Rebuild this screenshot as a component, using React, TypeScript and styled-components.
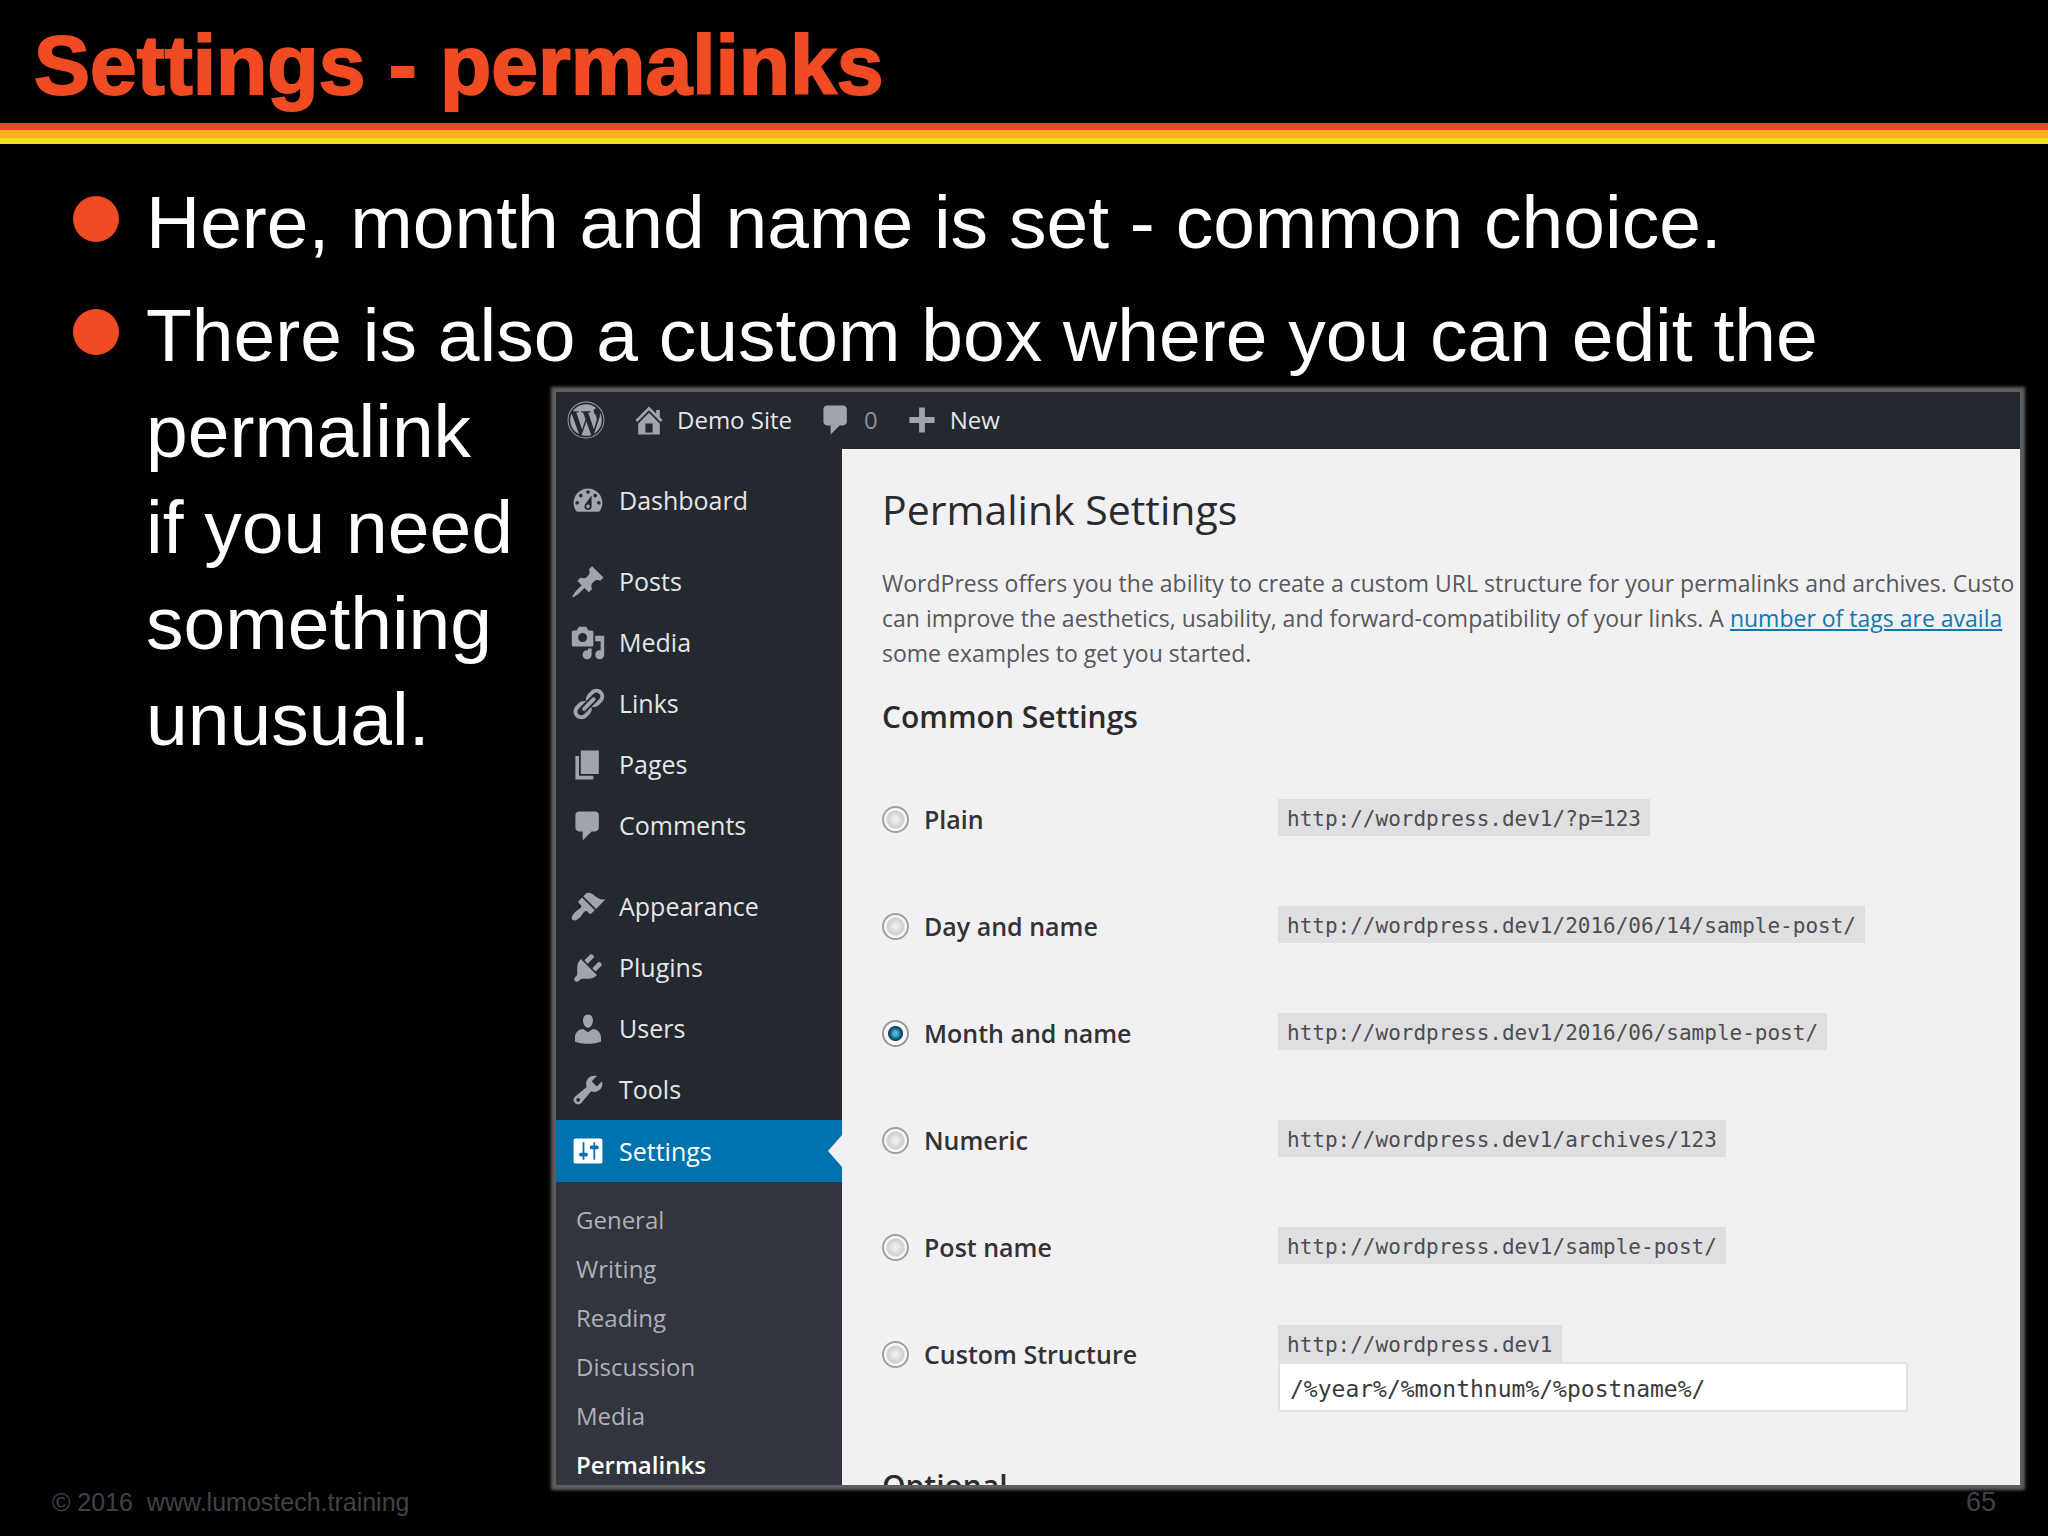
import React, { useState } from "react";
import styled, { createGlobalStyle, css } from "styled-components";
import { FaWordpress } from "react-icons/fa";

const GlobalStyle = createGlobalStyle`
  *, *::before, *::after { box-sizing: border-box; }
  body { margin: 0; background: #020003; }
  h1, h2, p, ul, figure { margin: 0; padding: 0; }
  ul { list-style: none; }
  a { color: inherit; text-decoration: none; }
`;

const slideFont = `"Liberation Sans", Arial, sans-serif`;
const adminFont = `"Open Sans", "Noto Sans", sans-serif`;
const codeFont = `"DejaVu Sans Mono", monospace`;

/* ---------- Slide ---------- */

const Slide = styled.main`
  display: flex;
  flex-direction: column;
  height: 100vh;
  overflow: hidden;
  font-family: ${slideFont};
  color: #fff;
`;

const TitleBar = styled.header`
  padding: 15px 34px 8px;
  background: #000;
`;

const Title = styled.h1`
  font-size: 84px;
  line-height: 100px;
  font-weight: 700;
  color: #f04b22;
  -webkit-text-stroke: 2px #f04b22;
`;

const Stripes = styled.div`
  height: 21px;
  flex: none;
  background: linear-gradient(#f04827 0 7px, #fcb01c 7px 15px, #ece01f 15px);
`;

const Bullets = styled.ul`
  flex: 1;
  min-height: 0;
  display: flex;
  flex-direction: column;
  gap: 17px;
  padding: 30px 28px 0 73px;
  font-size: 75px;
  line-height: 96px;
`;

const Bullet = styled.li<{ $fill?: boolean }>`
  display: flex;
  gap: 27px;
  ${(p) => p.$fill && css`flex: 1; min-height: 0;`}

  &::before {
    content: "";
    flex: none;
    width: 46px;
    height: 46px;
    margin-top: 22px;
    border-radius: 50%;
    background: #f04b22;
  }
`;

const BulletBody = styled.div`
  flex: 1;
  min-width: 0;
  display: flex;
  flex-direction: column;
`;

const Beside = styled.div`
  flex: 1;
  min-height: 0;
  display: flex;
  gap: 34px;
`;

const WrappedText = styled.p`
  flex: none;
  width: 376px;
`;

const Footer = styled.footer`
  flex: none;
  display: flex;
  justify-content: space-between;
  align-items: center;
  height: 51px;
  padding: 0 52px 18px;
  font-size: 25px;
  line-height: 32px;
  color: #434144;
  white-space: pre;
`;

const PageNumber = styled.span`
  font-size: 27px;
`;

/* ---------- Screen capture ---------- */

const Capture = styled.figure`
  flex: 1;
  min-width: 0;
  display: flex;
  flex-direction: column;
  margin-top: 9px;
  overflow: hidden;
  background: #f1f0f2;
  box-shadow: 0 0 3px 5px #5f5e60;
  font-family: ${adminFont};
  font-size: 24px;
  line-height: 35px;
`;

const AdminBar = styled.div`
  flex: none;
  display: flex;
  align-items: center;
  gap: 26px;
  height: 57px;
  padding: 0 11px 2px;
  background: #24282f;
  color: #e3e5e9;
`;

const BarItem = styled.a<{ $dim?: boolean }>`
  display: flex;
  align-items: center;
  gap: 10px;
  ${(p) => p.$dim && css`color: #8b8f96;`}
`;

const Glyph = styled.svg`
  flex: none;
  width: 36px;
  height: 36px;
  fill: #a0a4ab;
`;

const Logo = styled(FaWordpress)`
  width: 38px;
  height: 38px;
  color: #a0a4ab;
`;

const Workspace = styled.div`
  flex: 1;
  min-height: 0;
  display: flex;
`;

const Sidebar = styled.nav`
  flex: none;
  width: 286px;
  padding-top: 21px;
  overflow: hidden;
  background: #24282f;
  color: #e3e5e9;
`;

const MenuGroup = styled.ul`
  margin-bottom: 20px;
`;

const MenuLink = styled.a<{ $active?: boolean }>`
  position: relative;
  display: flex;
  align-items: center;
  gap: 13px;
  height: 61px;
  padding: 0 14px;
  font-size: 25px;

  ${(p) =>
    p.$active &&
    css`
      height: 62px;
      background: #0073ae;
      color: #fff;

      ${Glyph} {
        fill: #fff;
      }

      &::after {
        content: "";
        position: absolute;
        right: 0;
        top: 15px;
        border: 16px solid transparent;
        border-left-width: 0;
        border-right: 14px solid #f1f0f2;
      }
    `}
`;

const SubMenu = styled.ul`
  padding: 13px 20px 40px;
  background: #32353e;
`;

const SubLink = styled.a<{ $current?: boolean }>`
  display: block;
  line-height: 49px;
  color: ${(p) => (p.$current ? "#fff" : "#aeb1b7")};
  font-weight: ${(p) => (p.$current ? 600 : 400)};
`;

const Content = styled.section`
  flex: 1;
  min-width: 0;
  padding: 33px 0 0 40px;
  overflow: hidden;
  white-space: nowrap;
  color: #58585a;
`;

const PageHeading = styled.h2`
  font-size: 41px;
  line-height: 54px;
  font-weight: 400;
  color: #2b2b2e;
`;

const Intro = styled.p`
  margin-top: 30px;
  font-size: 23px;
`;

const TagLink = styled.a`
  color: #0f79ad;
  text-decoration: underline;
`;

const SectionHeading = styled.h3<{ $gap: number }>`
  margin: ${(p) => p.$gap}px 0 0;
  font-size: 30px;
  line-height: 40px;
  font-weight: 600;
  color: #2b2b2e;
`;

const OptionTable = styled.table`
  width: 100%;
  margin-top: 29px;
  border-collapse: collapse;

  th,
  td {
    height: 107px;
    padding: 0;
    text-align: left;
    vertical-align: top;
  }
  th {
    width: 396px;
    padding-top: 36px;
  }
  td {
    padding-top: 33px;
  }
`;

const StructureCell = styled.td`
  && {
    padding-top: 24px;
  }
`;

const OptionLabel = styled.label`
  display: flex;
  align-items: center;
  gap: 15px;
  font-size: 25px;
  font-weight: 600;
  color: #333336;
`;

const Radio = styled.input`
  appearance: none;
  width: 27px;
  height: 27px;
  margin: 0;
  border: 2px solid #a09fa1;
  border-radius: 50%;
  background: radial-gradient(circle at 50% 50%, #ececee 0 2px, #cfcfd1 8px, #f8f8f8 10px);

  &:checked {
    border-color: #98989b;
    background: radial-gradient(circle at 50% 50%, #4db4d6 0 2px, #17648f 5px, #123d5c 7px, #f4f6f8 8px);
  }
`;

const Code = styled.code`
  display: block;
  width: max-content;
  padding: 4px 9px 0;
  background: #dfdee0;
  font-family: ${codeFont};
  font-size: 21px;
  line-height: 33px;
  color: #4d4d4f;
`;

const StructureInput = styled.input`
  display: block;
  width: 630px;
  height: 50px;
  padding: 4px 10px 0;
  border: 2px solid #e2e1e4;
  border-radius: 3px;
  background: #fff;
  font-family: ${codeFont};
  font-size: 23px;
  color: #3a3a3c;
`;

/* ---------- Data ---------- */

const icons = {
  home: "M16 8.5l1.53 1.53-1.06 1.06L10 4.6l-6.47 6.49-1.06-1.06L10 2.5l4 4v-2h2v4zm-6-2.46l6 5.99V18H4v-5.97zM12 17v-5H8v5h4z",
  plus: "M17 8.4v3.2h-5.4V17H8.4v-5.4H3V8.4h5.4V3h3.2v5.4z",
  dashboard:
    "M3.76 16h12.48c1.1-1.37 1.76-3.11 1.76-5 0-4.42-3.58-8-8-8s-8 3.58-8 8c0 1.89.66 3.63 1.76 5zM10 4c.55 0 1 .45 1 1s-.45 1-1 1-1-.45-1-1 .45-1 1-1zM6 6c.55 0 1 .45 1 1s-.45 1-1 1-1-.45-1-1 .45-1 1-1zm8 0c.55 0 1 .45 1 1s-.45 1-1 1-1-.45-1-1 .45-1 1-1zm-5.37 5.55L12 7v6c0 1.1-.9 2-2 2s-2-.9-2-2c0-.57.24-1.08.63-1.45zM4 10c.55 0 1 .45 1 1s-.45 1-1 1-1-.45-1-1 .45-1 1-1zm12 0c.55 0 1 .45 1 1s-.45 1-1 1-1-.45-1-1 .45-1 1-1zm-5 3c0-.55-.45-1-1-1s-1 .45-1 1 .45 1 1 1 1-.45 1-1z",
  posts:
    "M10.44 3.02l1.82-1.82 6.36 6.35-1.83 1.82c-1.05-.68-2.48-.57-3.41.36l-.75.75c-.92.93-1.04 2.35-.35 3.41l-1.83 1.82-2.41-2.41-2.8 2.79c-.42.42-3.38 2.71-3.8 2.29s1.86-3.39 2.28-3.81l2.79-2.79L4.1 9.36l1.83-1.82c1.05.69 2.48.57 3.4-.36l.75-.75c.93-.92 1.05-2.35.36-3.41z",
  media:
    "M13 11V4c0-.55-.45-1-1-1h-1.67L9 1H5L3.67 3H2c-.55 0-1 .45-1 1v7c0 .55.45 1 1 1h10c.55 0 1-.45 1-1zM7 4.5c1.38 0 2.5 1.12 2.5 2.5S8.38 9.5 7 9.5 4.5 8.38 4.5 7 5.62 4.5 7 4.5zM14 6h5v10.5c0 1.38-1.12 2.5-2.5 2.5S14 17.88 14 16.5s1.12-2.5 2.5-2.5c.17 0 .34.02.5.05V9h-3V6zm-4 8.05V13h2v3.5c0 1.38-1.12 2.5-2.5 2.5S7 17.88 7 16.5 8.12 14 9.5 14c.17 0 .34.02.5.05z",
  links:
    "M17.74 2.76c1.68 1.69 1.68 4.41 0 6.1l-1.53 1.52c-1.12 1.12-2.7 1.47-4.14 1.09l2.62-2.61.76-.77.76-.76c.84-.84.84-2.2 0-3.04-.84-.85-2.2-.85-3.04 0l-.77.76-3.38 3.38c-.37-1.44-.02-3.02 1.1-4.14l1.52-1.53c1.69-1.68 4.42-1.68 6.1 0zM8.59 13.43l5.34-5.34c.42-.42.42-1.1 0-1.52-.44-.43-1.13-.39-1.53 0l-5.33 5.34c-.42.42-.42 1.1 0 1.52.44.43 1.13.39 1.52 0zm-.76 2.29l4.14-4.15c.38 1.44.03 3.02-1.09 4.14l-1.52 1.53c-1.69 1.68-4.41 1.68-6.1 0-1.68-1.68-1.68-4.42 0-6.1l1.53-1.52c1.12-1.12 2.7-1.47 4.14-1.1l-4.14 4.15c-.85.84-.85 2.2 0 3.05.84.84 2.2.84 3.04 0z",
  pages: "M6 15V2h10v13H6zm-1 1h8v2H3V5h2v11z",
  comments:
    "M5 2h9c1.1 0 2 .9 2 2v7c0 1.1-.9 2-2 2h-2l-5 5v-5H5c-1.1 0-2-.9-2-2V4c0-1.1.9-2 2-2z",
  appearance:
    "M14.48 11.06L7.41 3.99l1.5-1.5c.5-.56 2.3-.47 3.51.32 1.21.8 1.43 1.28 2.91 2.1 1.18.64 2.45 1.26 4.45.85zm-.71.71L6.7 4.7 4.93 6.47c-.39.39-.39 1.02 0 1.41l1.06 1.06c.39.39.39 1.03 0 1.42-.6.6-1.43 1.11-2.21 1.69-.35.26-.7.53-1.01.84C1.43 14.23.4 16.08 1.4 17.07c.99 1 2.84-.03 4.18-1.36.31-.31.58-.66.85-1.02.57-.78 1.08-1.61 1.69-2.21.39-.39 1.02-.39 1.41 0l1.06 1.06c.39.39 1.02.39 1.41 0z",
  plugins:
    "M13.11 4.36L9.87 7.6 8 5.73l3.24-3.24c.35-.34 1.05-.2 1.56.32.52.51.66 1.21.31 1.55zm-8 1.77l.91-1.12 9.01 9.01-1.19.84c-.71.71-2.63 1.16-3.82 1.16H6.14L4.9 17.26c-.59.59-1.54.59-2.12 0-.59-.58-.59-1.53 0-2.12l1.24-1.24v-3.88c0-1.13.4-3.19 1.09-3.89zm7.26 3.97l3.24-3.24c.34-.35 1.04-.21 1.55.31.52.51.66 1.21.31 1.55l-3.24 3.25z",
  users:
    "M10 9.25c-2.27 0-2.73-3.44-2.73-3.44C7 4.02 7.82 2 9.97 2c2.16 0 2.98 2.02 2.71 3.81 0 0-.41 3.44-2.68 3.44zm0 2.57L12.72 10c2.39 0 4.52 2.33 4.52 4.53v2.49s-3.65 1.13-7.24 1.13c-3.65 0-7.24-1.13-7.24-1.13v-2.49c0-2.25 1.94-4.48 4.47-4.48z",
  tools:
    "M16.68 9.77c-1.34 1.34-3.3 1.67-4.95.99l-5.41 6.52c-.99.99-2.59.99-3.58 0s-.99-2.59 0-3.57l6.52-5.42c-.68-1.65-.35-3.61.99-4.95 1.28-1.28 3.12-1.62 4.72-1.06l-2.89 2.89 2.82 2.82 2.86-2.87c.53 1.58.18 3.39-1.08 4.65zM3.81 16.21c.4.39 1.04.39 1.43 0 .4-.4.4-1.04 0-1.43-.39-.4-1.03-.4-1.43 0-.39.39-.39 1.03 0 1.43z",
  settings:
    "M18 16V4c0-.55-.45-1-1-1H3c-.55 0-1 .45-1 1v12c0 .55.45 1 1 1h14c.55 0 1-.45 1-1zM8 11h1c.55 0 1 .45 1 1s-.45 1-1 1H8v1.5c0 .28-.22.5-.5.5s-.5-.22-.5-.5V13H6c-.55 0-1-.45-1-1s.45-1 1-1h1V5.5c0-.28.22-.5.5-.5s.5.22.5.5V11zm5-2h-1c-.55 0-1-.45-1-1s.45-1 1-1h1V5.5c0-.28.22-.5.5-.5s.5.22.5.5V7h1c.55 0 1 .45 1 1s-.45 1-1 1h-1v5.5c0 .28-.22.5-.5.5s-.5-.22-.5-.5V9z",
};

type IconName = keyof typeof icons;

const Icon = ({ name }: { name: IconName }) => (
  <Glyph viewBox="0 0 20 20" aria-hidden="true">
    <path fillRule="evenodd" d={icons[name]} />
  </Glyph>
);

const menuGroups: { label: string; icon: IconName }[][] = [
  [{ label: "Dashboard", icon: "dashboard" }],
  [
    { label: "Posts", icon: "posts" },
    { label: "Media", icon: "media" },
    { label: "Links", icon: "links" },
    { label: "Pages", icon: "pages" },
    { label: "Comments", icon: "comments" },
  ],
  [
    { label: "Appearance", icon: "appearance" },
    { label: "Plugins", icon: "plugins" },
    { label: "Users", icon: "users" },
    { label: "Tools", icon: "tools" },
    { label: "Settings", icon: "settings" },
  ],
];

const settingsPages = ["General", "Writing", "Reading", "Discussion", "Media", "Permalinks"];

const host = "http://wordpress.dev1";

const options = [
  { id: "plain", label: "Plain", sample: "/?p=123" },
  { id: "day", label: "Day and name", sample: "/2016/06/14/sample-post/" },
  { id: "month", label: "Month and name", sample: "/2016/06/sample-post/" },
  { id: "numeric", label: "Numeric", sample: "/archives/123" },
  { id: "post", label: "Post name", sample: "/sample-post/" },
  { id: "custom", label: "Custom Structure", sample: "" },
];

/* ---------- Parts ---------- */

const AdminMenu = () => (
  <Sidebar>
    {menuGroups.map((group, i) => (
      <MenuGroup key={i}>
        {group.map(({ label, icon }) => (
          <li key={label}>
            <MenuLink href="#" $active={label === "Settings"}>
              <Icon name={icon} />
              {label}
            </MenuLink>
            {label === "Settings" && (
              <SubMenu>
                {settingsPages.map((page) => (
                  <li key={page}>
                    <SubLink href="#" $current={page === "Permalinks"}>
                      {page}
                    </SubLink>
                  </li>
                ))}
              </SubMenu>
            )}
          </li>
        ))}
      </MenuGroup>
    ))}
  </Sidebar>
);

const PermalinkForm = () => {
  const [choice, setChoice] = useState("month");
  const [structure, setStructure] = useState("/%year%/%monthnum%/%postname%/");

  return (
    <Content>
      <PageHeading>Permalink Settings</PageHeading>
      <Intro>
        WordPress offers you the ability to create a custom URL structure for your permalinks and archives. Custo
        <br />
        can improve the aesthetics, usability, and forward-compatibility of your links. A{" "}
        <TagLink href="#">number of tags are availa</TagLink>
        <br />
        some examples to get you started.
      </Intro>
      <SectionHeading $gap={26}>Common Settings</SectionHeading>
      <OptionTable>
        <tbody>
          {options.map(({ id, label, sample }) => (
            <tr key={id}>
              <th scope="row">
                <OptionLabel htmlFor={id}>
                  <Radio
                    type="radio"
                    id={id}
                    name="structure"
                    checked={choice === id}
                    onChange={() => setChoice(id)}
                  />
                  {label}
                </OptionLabel>
              </th>
              {id === "custom" ? (
                <StructureCell>
                  <Code>{host}</Code>
                  <StructureInput
                    type="text"
                    aria-label="Custom Structure"
                    value={structure}
                    onChange={(e) => setStructure(e.target.value)}
                  />
                </StructureCell>
              ) : (
                <td>
                  <Code>
                    {host}
                    {sample}
                  </Code>
                </td>
              )}
            </tr>
          ))}
        </tbody>
      </OptionTable>
      <SectionHeading $gap={54}>Optional</SectionHeading>
    </Content>
  );
};

export default function App() {
  return (
    <Slide>
      <GlobalStyle />
      <TitleBar>
        <Title>Settings - permalinks</Title>
      </TitleBar>
      <Stripes />
      <Bullets>
        <Bullet>
          <BulletBody>
            <p>Here, month and name is set - common choice.</p>
          </BulletBody>
        </Bullet>
        <Bullet $fill>
          <BulletBody>
            <p>There is also a custom box where you can edit the</p>
            <Beside>
              <WrappedText>permalink if you need something unusual.</WrappedText>
              <Capture>
                <AdminBar>
                  <BarItem href="#" aria-label="WordPress">
                    <Logo />
                  </BarItem>
                  <BarItem href="#">
                    <Icon name="home" />
                    Demo Site
                  </BarItem>
                  <BarItem href="#" $dim>
                    <Icon name="comments" />0
                  </BarItem>
                  <BarItem href="#">
                    <Icon name="plus" />
                    New
                  </BarItem>
                </AdminBar>
                <Workspace>
                  <AdminMenu />
                  <PermalinkForm />
                </Workspace>
              </Capture>
            </Beside>
          </BulletBody>
        </Bullet>
      </Bullets>
      <Footer>
        <span>© 2016  www.lumostech.training</span>
        <PageNumber>65</PageNumber>
      </Footer>
    </Slide>
  );
}
